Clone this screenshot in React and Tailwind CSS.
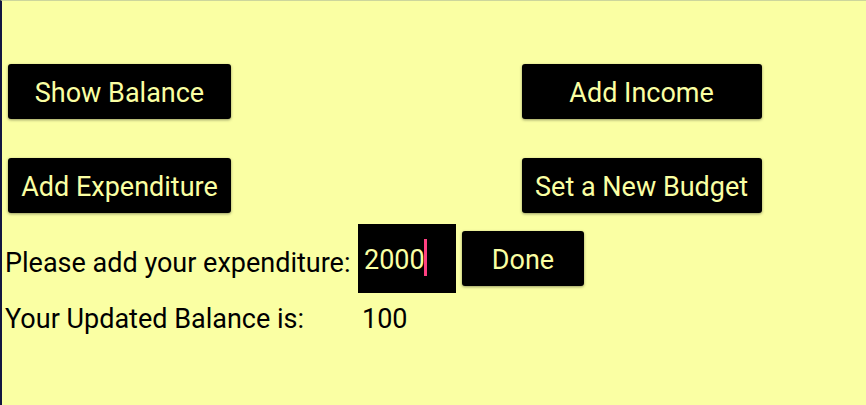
import { useState } from "react";

function ActionButton({ className, children }) {
  return (
    <button
      type="button"
      className={`h-[55px] rounded-[3px] bg-black pt-0.5 text-[#faffa3] whitespace-nowrap shadow-[0_1px_3px_rgba(0,0,0,0.4)] ${className}`}
    >
      {children}
    </button>
  );
}

export default function App() {
  const [amount, setAmount] = useState("2000");

  return (
    <main className="min-h-screen border-t border-l-2 border-t-[#ccd69c] border-l-[#12163f] bg-[#faffa3] pt-[63px] font-[Roboto,sans-serif] text-[27px] leading-8 text-black">
      <div className="grid grid-cols-[3fr_2fr] gap-y-[39px] pr-0.5 pl-1.5">
        <ActionButton className="w-[223px]">Show Balance</ActionButton>
        <ActionButton className="w-[240px]">Add Income</ActionButton>
        <ActionButton className="w-[223px]">Add Expenditure</ActionButton>
        <ActionButton className="w-[240px]">Set a New Budget</ActionButton>
      </div>

      <form className="mt-[11px] pl-[3px]" onSubmit={(e) => e.preventDefault()}>
        <div className="flex items-center">
          <label htmlFor="expenditure" className="w-[353px] pt-2 whitespace-nowrap">
            Please add your expenditure:
          </label>
          <div className="relative mr-1.5">
            <input
              id="expenditure"
              type="text"
              inputMode="numeric"
              value={amount}
              onChange={(e) => setAmount(e.target.value)}
              className="block h-[69px] w-[98px] bg-black px-1.5 pt-0.5 text-[#faffa3] caret-transparent outline-none"
            />
            <span className="pointer-events-none absolute top-[15px] left-[66px] h-[37px] w-[3px] bg-[#ff4081]" />
          </div>
          <ActionButton className="w-[122px]">Done</ActionButton>
        </div>
        <div className="mt-2.5 flex items-center">
          <label htmlFor="balance" className="w-[353px]">
            Your Updated Balance is:
          </label>
          <output id="balance" className="pl-1">100</output>
        </div>
      </form>
    </main>
  );
}
